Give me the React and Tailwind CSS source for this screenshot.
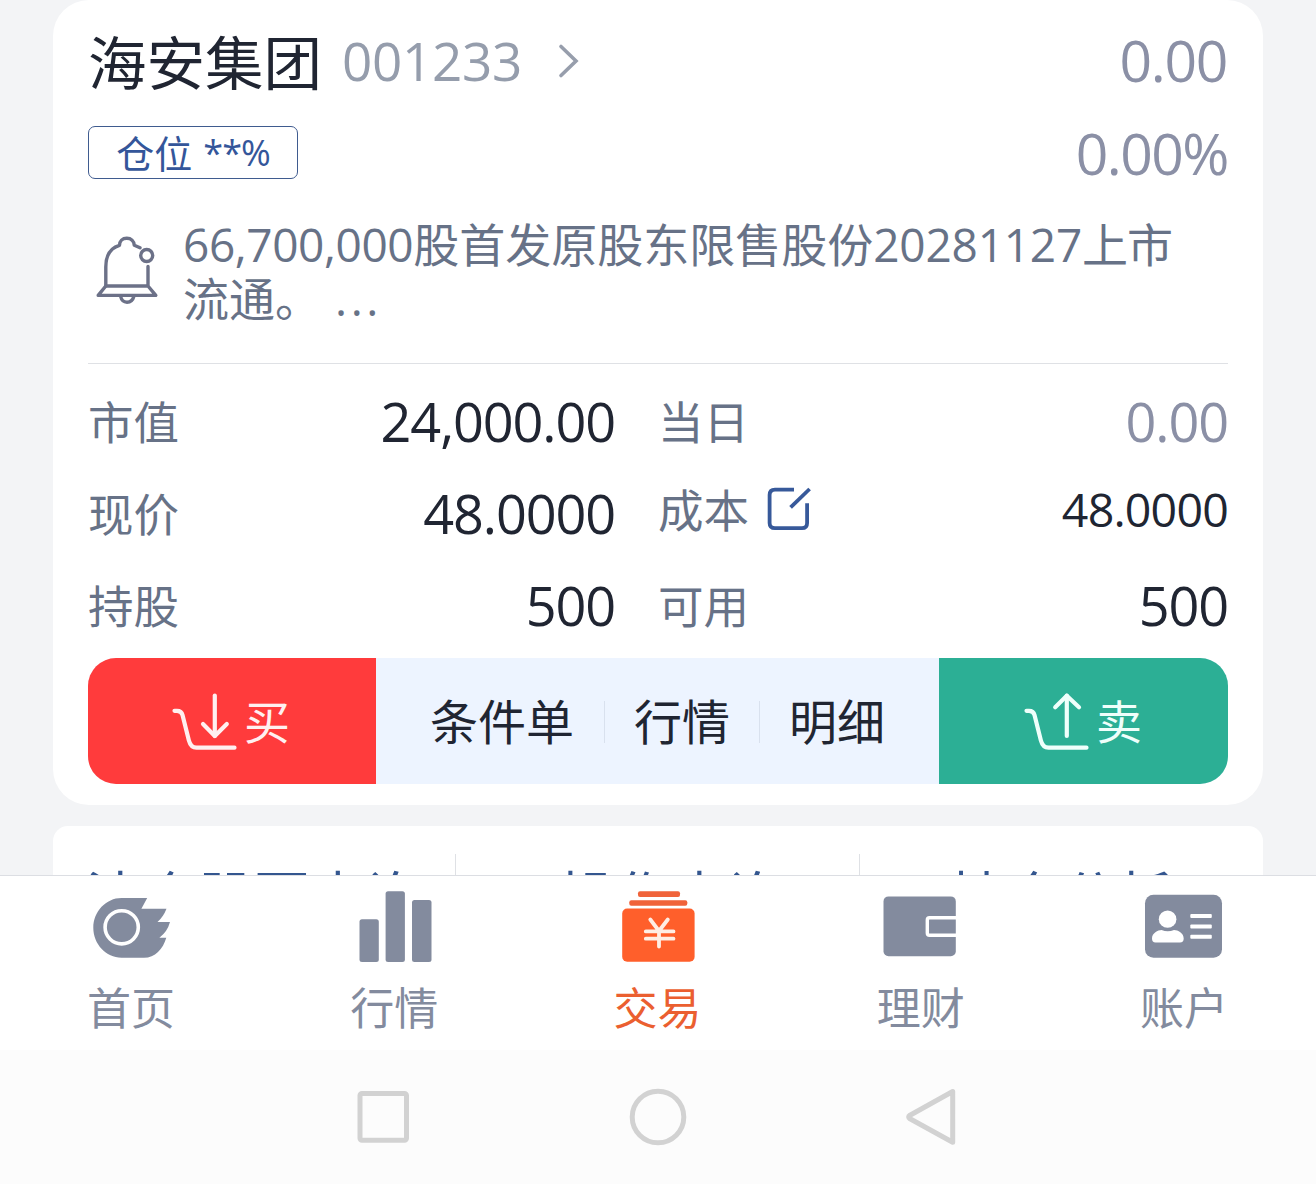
const tabs = [
  { key: 'home', label: '首页', icon: HomeIcon },
  { key: 'market', label: '行情', icon: MarketIcon },
  { key: 'trade', label: '交易', icon: TradeIcon, active: true },
  { key: 'wealth', label: '理财', icon: WalletIcon },
  { key: 'account', label: '账户', icon: AccountIcon },
];

function HomeIcon() {
  return (
    <svg viewBox="92 888 80 76" className="w-[80px] h-[76px]">
      <path
        fill="#838b9e"
        d="M121.5 898H147.2L141.4 908.7H166.5Q163.5 916.5 157.5 922H170Q167.5 931.5 159.4 937.7H166.3C163 949 155 957.8 144 957.8H121.5C106 957.8 93.3 944 93.3 927.8S106 898 121.5 898Z"
      />
      <circle cx="121.7" cy="927.3" r="16.6" fill="none" stroke="#fff" strokeWidth="3.6" />
    </svg>
  );
}

function MarketIcon() {
  return (
    <svg viewBox="355 888 80 76" className="w-[80px] h-[76px]" fill="#838b9e">
      <rect x="359.5" y="919.3" width="19.3" height="42.7" rx="2.5" />
      <rect x="385.6" y="891.3" width="19.3" height="70.7" rx="2.5" />
      <rect x="412" y="900" width="19.5" height="62" rx="2.5" />
    </svg>
  );
}

function TradeIcon() {
  return (
    <svg viewBox="618 888 80 76" className="w-[80px] h-[76px]">
      <rect x="638" y="891.3" width="42" height="5.6" rx="2" fill="#f0633a" />
      <rect x="629.3" y="900.2" width="58" height="5.6" rx="2" fill="#f0633a" />
      <rect x="622.2" y="908.5" width="72.4" height="53.3" rx="5" fill="#ff5f2b" />
      <path
        d="M650.3 919.5L659 931L667.8 919.5M659 931V946.5M645.8 931.4H673.5M645.8 938.7H673.5"
        fill="none"
        stroke="#ffeee4"
        strokeWidth="3.8"
        strokeLinecap="round"
      />
    </svg>
  );
}

function WalletIcon() {
  return (
    <svg viewBox="881 888 80 76" className="w-[80px] h-[76px]">
      <rect x="883.5" y="896.4" width="72.3" height="59.8" rx="5" fill="#838b9e" />
      <path d="M956 917.7H929.5Q927.3 917.7 927.3 920V933Q927.3 935.3 929.5 935.3H956" fill="none" stroke="#fff" strokeWidth="3.4" />
    </svg>
  );
}

function AccountIcon() {
  return (
    <svg viewBox="1144 888 80 76" className="w-[80px] h-[76px]">
      <rect x="1145" y="894.8" width="77" height="63" rx="8.5" fill="#838b9e" />
      <g fill="#fff">
        <ellipse cx="1167.6" cy="919.2" rx="8.8" ry="8.6" />
        <path d="M1152 938.5C1152 933 1158 930 1161.5 930Q1167.8 932.6 1174 930C1178 930 1183.7 933 1183.7 938.5Q1183.7 942.4 1180 942.4H1155.5Q1152 942.4 1152 938.5Z" />
        <rect x="1190.3" y="914" width="21.5" height="4" rx="1" />
        <rect x="1190.3" y="924.4" width="21.5" height="4" rx="1" />
        <rect x="1190.3" y="934.8" width="21.5" height="4" rx="1" />
      </g>
    </svg>
  );
}

function BellIcon() {
  return (
    <svg viewBox="95 232 66 74" className="w-[66px] h-[74px] shrink-0" fill="none" stroke="#6c7188" strokeWidth="3.4" strokeLinejoin="round" strokeLinecap="round">
      <path d="M105.8 286V267C105.8 254 112 247.5 119.5 245.3C119.5 241 122.5 238.2 126.8 238.2S134 241 134.3 245.3L140 247.8" />
      <circle cx="146.7" cy="255.5" r="6" />
      <path d="M148 266.5V286M105.8 286H148L155.8 295.4H98.2Z" />
      <path d="M120.5 296C121.5 300.5 124 302.2 127 302.2S132.8 300.5 134 296" />
    </svg>
  );
}

function EditIcon() {
  return (
    <svg viewBox="767 486 44 44" className="w-[44px] h-[44px]" fill="none" stroke="#37599a" strokeWidth="3.8">
      <path d="M794 488.6H775Q769.6 488.6 769.6 494V522Q769.6 527.2 775 527.2H802Q807.1 527.2 807.1 522V502.3" />
      <path d="M790.6 506.4L809.6 488" />
    </svg>
  );
}

function CartIcon({ up }) {
  return (
    <svg viewBox="170.5 690 68 60" className="w-[68px] h-[60px]" fill="none" stroke="currentColor" strokeWidth="4.2" strokeLinecap="round" strokeLinejoin="round">
      <path d="M174 709.8H176.5Q181 709.8 182 714L188.4 739.5Q190.3 746.7 196 746.7H234" />
      <path d="M214.3 694.5V735" />
      <path d={up ? 'M202.7 706.3L214.3 694.8L226.5 706.3' : 'M202.5 723L214.3 735L226.3 723'} />
    </svg>
  );
}

const Stat = ({ label, value, valueClass = 'text-[54px] tracking-[-1.1px] text-[#202532]', children }) => (
  <div className="flex h-[92px] items-center justify-between">
    <div className="flex items-center">
      <span className="text-[45.5px] leading-[60px] text-[#677287]">{label}</span>
      {children}
    </div>
    <span className={`pb-[2px] leading-[60px] ${valueClass}`}>{value}</span>
  </div>
);

const App = () => {
  return (
    <div className="flex h-[1184px] w-[1316px] flex-col overflow-hidden bg-[#f3f4f6] font-['Open_Sans','Noto_Sans_CJK_SC',sans-serif] whitespace-nowrap">
      <main className="h-[875px] overflow-hidden px-[53px]">
        <section className="h-[805px] rounded-[36px] bg-white px-[35px]">
          <div className="flex h-[122px] items-center justify-between">
            <div className="flex items-center">
              <h1 className="pt-[2px] text-[58.5px] leading-[70px] text-[#202532]">海安集团</h1>
              <span className="ml-[20px] text-[53px] leading-[70px] tracking-[-0.3px] text-[#959dac]">001233</span>
              <svg viewBox="0 0 24 36" className="ml-[35px] h-[36px] w-[24px]" fill="none" stroke="#979eac" strokeWidth="3.6" strokeLinecap="round">
                <path d="M4 3.5L19 18L4 32.5" />
              </svg>
            </div>
            <span className="pr-[1px] pb-[2px] text-[57px] leading-[70px] tracking-[-1.3px] text-[#8b90a6]">0.00</span>
          </div>

          <div className="flex h-[62px] items-center justify-between">
            <span className="-mt-[1px] flex h-[53px] w-[210px] items-center justify-center gap-[11px] rounded-[7px] border border-[#3f5b8f] text-[38px] leading-[50px] text-[#34569a]">
              <span>仓位</span>
              <span className="text-[36px] tracking-[-1px]">**%</span>
            </span>
            <span className="text-[57px] leading-[60px] tracking-[-1.5px] text-[#8b90a6]">0.00%</span>
          </div>

          <div className="flex h-[179px] pt-[33px]">
            <div className="ml-[7px] pt-[15px]">
              <BellIcon />
            </div>
            <p className="ml-[22px] text-[46px] leading-[54px] text-[#677287]">
              <span className="tracking-[-0.4px]">66,700,000</span>股首发原股东限售股份<span className="tracking-[-0.2px]">20281127</span>
              <span className="tracking-[-1px]">上市</span>
              <br />
              流通。 <span className="pl-[2px] tracking-[3.6px]">...</span>
            </p>
          </div>

          <div className="h-px bg-[#dfe1e5]" />

          <div className="grid h-[294px] grid-cols-[527px_570px] content-start gap-x-[43px] pt-[12px]">
            <Stat label="市值" value="24,000.00" />
            <Stat label="当日" value="0.00" valueClass="text-[54px] tracking-[-1.1px] text-[#8b90a6]" />
            <Stat label="现价" value="48.0000" />
            <div className="-mt-[4px] h-[92px]">
              <Stat label="成本" value="48.0000" valueClass="text-[46.5px] tracking-[-0.8px] text-[#202532]">
                <span className="ml-[18px] pb-[3px]">
                  <EditIcon />
                </span>
              </Stat>
            </div>
            <Stat label="持股" value="500" />
            <Stat label="可用" value="500" />
          </div>

          <div className="flex h-[126px] overflow-hidden rounded-[28px] bg-[#edf4ff] text-[48px] text-[#202532]">
            <button className="flex w-[288px] items-center bg-[#ff3b3c] pl-[83px] text-[46px] text-[#fff0f0]">
              <CartIcon />
              <span className="ml-[5px] leading-[60px]">买</span>
            </button>
            <div className="flex flex-1 items-center justify-center pt-px leading-[60px]">
              <span className="pr-[30px]">条件单</span>
              <span className="h-[42px] w-px bg-[#d9e1ee]" />
              <span className="px-[29px]">行情</span>
              <span className="h-[42px] w-px bg-[#d9e1ee]" />
              <span className="pl-[29px]">明细</span>
            </div>
            <button className="flex w-[289px] items-center bg-[#2caf95] pl-[84px] text-[46px] text-[#effffb]">
              <CartIcon up />
              <span className="ml-[5px] leading-[60px]">卖</span>
            </button>
          </div>
        </section>

        <section className="mt-[21px] grid h-[120px] grid-cols-[402px_405px_403px] rounded-[15px] bg-white pt-[28px] text-center text-[56px] leading-[85px] text-[#34568f]">
          <span>清仓股票查询</span>
          <span className="border-x border-[#dfe1e5] pl-[28px]">操作查询</span>
          <span>持仓分析</span>
        </section>
      </main>

      <nav className="grid h-[175px] grid-cols-5 border-t border-[#dcdee3] bg-white pt-[12px]">
        {tabs.map(({ key, label, icon: Icon, active }) => (
          <div key={key} className="flex flex-col items-center">
            <Icon />
            <span className={`mt-[14px] pr-px text-[44px] leading-[60px] ${active ? 'text-[#eb5f30]' : 'text-[#838b9e]'}`}>{label}</span>
          </div>
        ))}
      </nav>

      <footer className="flex h-[134px] items-center justify-center gap-[215px] bg-[#fcfcfc]">
        <svg viewBox="353 1087 60 60" className="h-[60px] w-[60px]" fill="none" stroke="#d2d2d2" strokeWidth="5">
          <rect x="360" y="1093.5" width="46.5" height="46.8" rx="2" />
        </svg>
        <svg viewBox="628 1087 60 60" className="h-[60px] w-[60px]" fill="none" stroke="#d2d2d2" strokeWidth="5">
          <circle cx="658" cy="1117" r="25.8" />
        </svg>
        <svg viewBox="903 1087 60 60" className="h-[60px] w-[60px]" fill="none" stroke="#d2d2d2" strokeWidth="5" strokeLinejoin="round">
          <path d="M952.7 1091.5V1142.3L910 1118.8Q907.3 1117 910 1115.2Z" />
        </svg>
      </footer>
    </div>
  );
};

export default App;
